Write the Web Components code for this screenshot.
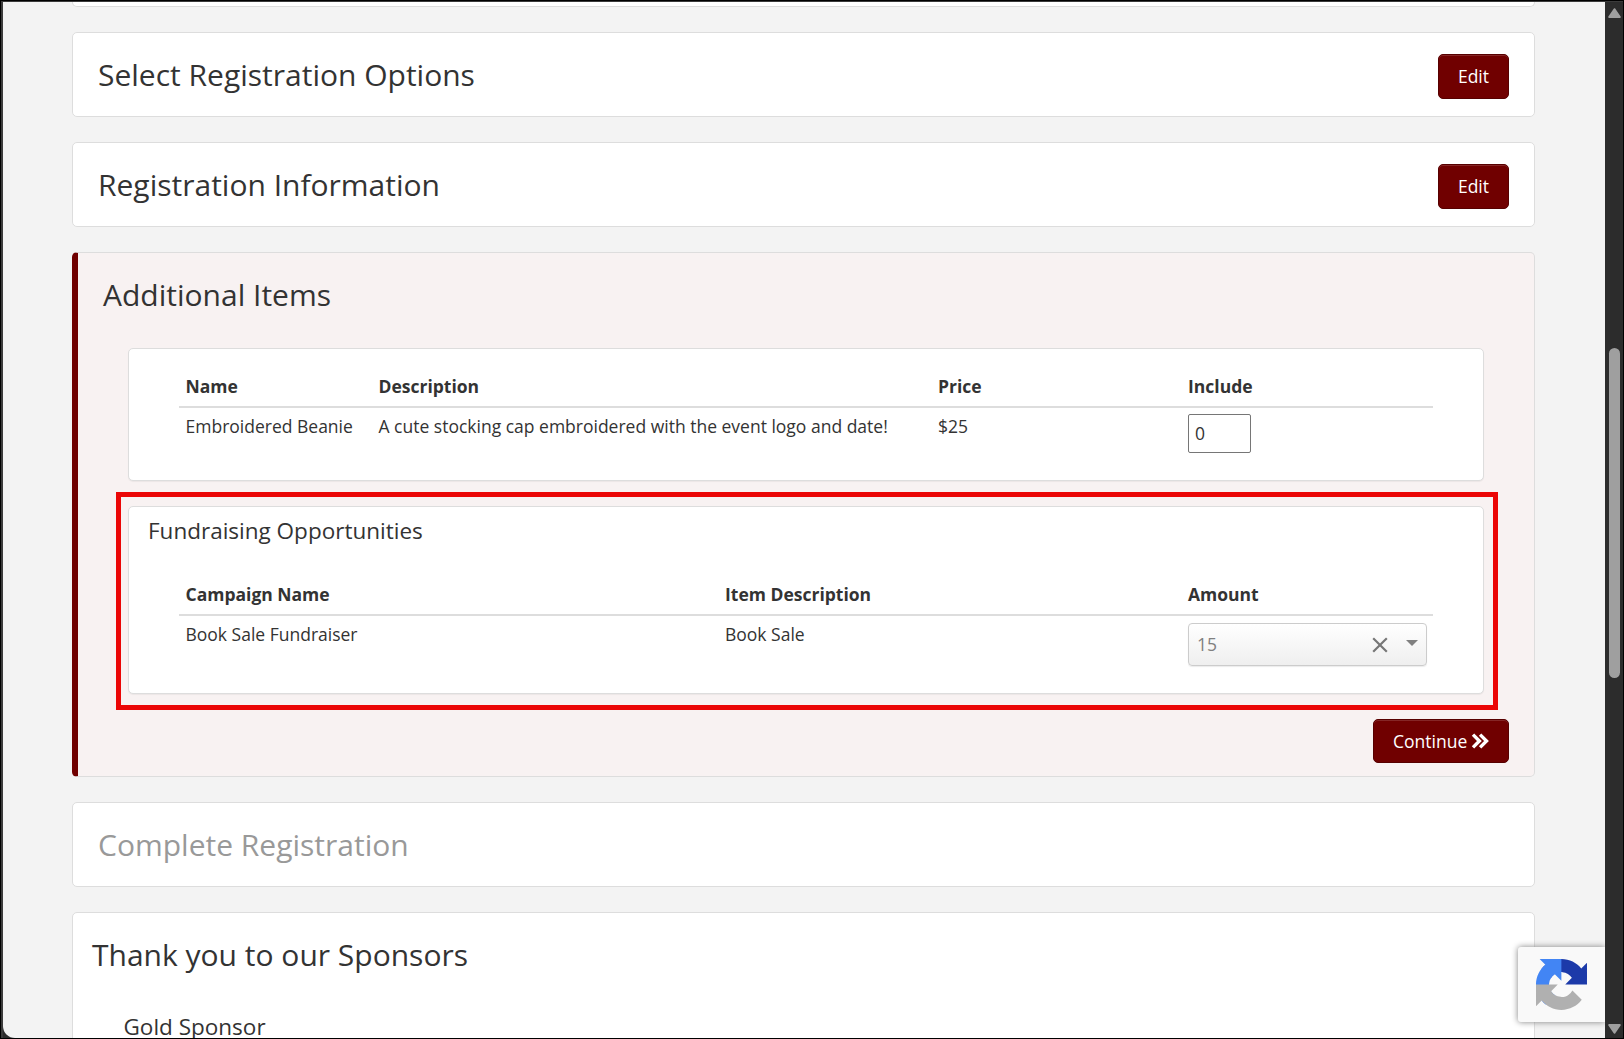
<!DOCTYPE html>
<html lang="en">
<head>
<meta charset="utf-8">
<title>Event Registration</title>
<style>
  html, body { margin: 0; height: 100%; overflow: hidden; }
  body { background: #000; color: #333; font: 17.5px/25px "Open Sans", "Noto Sans", sans-serif; }
</style>
</head>
<body>
<app-window>
  <reg-section></reg-section>
  <reg-section heading="Select Registration Options"><action-button slot="action">Edit</action-button></reg-section>
  <reg-section heading="Registration Information"><action-button slot="action">Edit</action-button></reg-section>
  <reg-section heading="Additional Items" active>
    <item-panel>
      <item-table style="--cols: 193px 559.5px 250px 1fr">
        <span slot="head">Name</span>
        <span slot="head">Description</span>
        <span slot="head">Price</span>
        <span slot="head">Include</span>
        <span slot="cell">Embroidered Beanie</span>
        <span slot="cell">A cute stocking cap embroidered with the event logo and date!</span>
        <span slot="cell">$25</span>
        <quantity-box slot="cell">0</quantity-box>
      </item-table>
    </item-panel>
    <item-panel heading="Fundraising Opportunities" marked>
      <item-table style="--cols: 539.5px 463px 1fr">
        <span slot="head">Campaign Name</span>
        <span slot="head">Item Description</span>
        <span slot="head">Amount</span>
        <span slot="cell">Book Sale Fundraiser</span>
        <span slot="cell">Book Sale</span>
        <amount-select slot="cell">15</amount-select>
      </item-table>
    </item-panel>
    <action-button slot="footer" next>Continue</action-button>
  </reg-section>
  <reg-section heading="Complete Registration" disabled></reg-section>
  <sponsor-section heading="Thank you to our Sponsors">Gold Sponsor</sponsor-section>
  <captcha-badge slot="overlay"></captcha-badge>
  <scroll-bar slot="scroll"></scroll-bar>
</app-window>

<script>
// REGISTER AN ELEMENT THAT RENDERS ITS TEMPLATE INTO A SHADOWROOT
function define(name, render) {
  window.customElements.define(name, class extends HTMLElement {
    connectedCallback() {
      if (this.shadowRoot) { return; }
      this.attachShadow({ mode : "open" });
      this.shadowRoot.innerHTML = render(this);
    }
  });
}

// WINDOW FRAME AROUND THE SCROLLED PAGE
define('app-window', () => `
  <style>
    :host { display: flex; box-sizing: border-box; height: 100vh; padding: 1px; background: #000; }
    .frame { position: relative; display: flex; flex: 1; overflow: hidden; border-top: 1px solid #3b3b3b; border-left: 2px solid #3b3b3b; background: #2c2c2c; }
    main { display: flex; flex-direction: column; gap: 25px; flex: 1; box-sizing: border-box; padding: 0 70px 0 69px; overflow: hidden; background: #f3f3f3; border-bottom-left-radius: 12px; }
    ::slotted(reg-section:first-child) { height: 5px; min-height: 0; border-top: 0; border-radius: 0 0 5px 5px; }
  </style>
  <div class="frame">
    <main><slot></slot></main>
    <slot name="overlay"></slot>
    <slot name="scroll"></slot>
  </div>
`);

// ONE STEP OF THE REGISTRATION
define('reg-section', el => `
  <style>
    :host { display: block; flex: none; box-sizing: border-box; min-height: 85px; border: 1px solid #ddd; border-radius: 5px; background: #fff; }
    header { display: flex; align-items: center; justify-content: space-between; height: 83px; padding: 0 25px; }
    h2 { margin: 0; font-size: 30px; line-height: 33px; font-weight: 400; }
    ::slotted([slot="action"]) { margin-top: 4px; }
    footer { display: flex; justify-content: flex-end; padding: 25px 25px 0 0; }
    :host([active]) { height: 525px; border-left: 6px solid #700000; background: #f8f2f2; }
    :host([active]) header { height: 82px; }
    :host([disabled]) h2 { color: #999; }
    .body { display: flex; flex-direction: column; gap: 25px; padding: 13px 50px 0; }
  </style>
  ${el.hasAttribute('heading') ? `<header><h2>${el.getAttribute('heading')}</h2><slot name="action"></slot></header>` : ''}
  ${el.hasAttribute('active') ? `<div class="body"><slot></slot></div><footer><slot name="footer"></slot></footer>` : ''}
`);

define('action-button', el => `
  <style>
    :host { display: inline-flex; align-items: center; gap: 4px; box-sizing: border-box; height: 45px; padding: 0 19px; border: 1px solid #570000; border-radius: 5px; background: #700000; color: #fff; box-shadow: inset 0 1px 0 rgba(255,255,255,.15); }
    :host([next]) { width: 136px; height: 44px; }
    svg { display: block; flex: none; margin-top: -1px; }
  </style>
  <slot></slot>
  ${el.hasAttribute('next') ? `<svg width="18" height="16" viewBox="0 0 18 16"><path d="M2 1.6 8.4 8 2 14.4M9.1 1.6 15.5 8 9.1 14.4" fill="none" stroke="#fff" stroke-width="3.4"/></svg>` : ''}
`);

// WHITE BOX, OPTIONALLY MARKED WITH A RED OUTLINE
define('item-panel', el => `
  <style>
    :host { display: block; position: relative; box-sizing: border-box; height: 133px; padding: 18px 50px 0; border: 1px solid #ddd; border-radius: 5px; background: #fff; box-shadow: 0 1px 1px rgba(0,0,0,.05); }
    :host([heading]) { height: 188px; padding-top: 10px; }
    h3 { margin: 0 0 31px -31px; font-size: 22.5px; line-height: 27px; font-weight: 400; }
    .mark { position: absolute; top: -15px; right: -15px; bottom: -17px; left: -13px; border: 5px solid #eb0606; pointer-events: none; }
  </style>
  ${el.hasAttribute('heading') ? `<h3>${el.getAttribute('heading')}</h3>` : ''}
  <slot></slot>
  ${el.hasAttribute('marked') ? '<div class="mark"></div>' : ''}
`);

define('item-table', () => `
  <style>
    :host { display: block; }
    .row { display: grid; grid-template-columns: var(--cols); }
    .head { height: 39px; border-bottom: 2px solid #ddd; font-weight: 700; }
    ::slotted(*) { margin: 6px 0 0 6.5px; white-space: nowrap; }
    ::slotted([slot="head"]) { margin-top: 7px; }
  </style>
  <div class="row head"><slot name="head"></slot></div>
  <div class="row"><slot name="cell"></slot></div>
`);

define('quantity-box', () => `
  <style>
    :host { display: flex; align-items: center; box-sizing: border-box; width: 63px; height: 39px; padding-left: 6px; border: 1px solid #767676; border-radius: 2px; background: #fff; }
  </style>
  <slot></slot>
`);

define('amount-select', () => `
  <style>
    :host { display: flex; align-items: center; box-sizing: border-box; width: 239px; height: 43px; margin-top: 7px !important; padding: 0 8px; border: 1px solid #ccc; border-radius: 4px; background: linear-gradient(#fff, #efefef); color: #808080; box-shadow: 0 1px 1px rgba(0,0,0,.08); }
    .value { flex: 1; }
    .clear { margin-right: 18px; }
    .arrow { margin-top: -3px; }
  </style>
  <span class="value"><slot></slot></span>
  <svg class="clear" width="16" height="16" viewBox="0 0 16 16"><path d="M1.2 1.2 14.8 14.8M14.8 1.2 1.2 14.8" stroke="#777" stroke-width="2.2"/></svg>
  <svg class="arrow" width="12" height="6" viewBox="0 0 12 6"><path d="M0 0H12L6 6Z" fill="#808080"/></svg>
`);

define('sponsor-section', el => `
  <style>
    :host { display: block; flex: none; box-sizing: border-box; height: 300px; padding: 25px 19px 0; border: 1px solid #ddd; border-radius: 5px; background: #fff; }
    h2 { margin: 0; font-size: 30px; line-height: 33px; font-weight: 400; }
    h3 { margin: 42px 0 0 31.5px; font-size: 22.5px; line-height: 27px; font-weight: 400; }
  </style>
  <h2>${el.getAttribute('heading')}</h2>
  <h3><slot></slot></h3>
`);

define('captcha-badge', () => `
  <style>
    :host { position: absolute; right: 18px; bottom: 16px; display: block; box-sizing: border-box; width: 87px; height: 75px; padding: 12px 0 0 18px; border-radius: 3px 0 0 3px; background: #f9f9f9; box-shadow: 0 0 6px #808080; clip-path: inset(-10px 0 -10px -10px); }
    svg { display: block; }
  </style>
  <svg width="51" height="51" viewBox="0 0 64 64">
    <path fill="#1c3aa9" d="M64 31.955l-.033-1.37V4.687l-7.16 7.16C50.948 4.674 42.033.093 32.05.093c-10.4 0-19.622 4.96-25.458 12.64l11.736 11.86a15.55 15.55 0 0 1 4.754-5.334c2.05-1.6 4.952-2.906 8.968-2.906.485 0 .86.057 1.135.163 4.976.393 9.288 3.14 11.828 7.124l-8.307 8.307L64 31.953"/>
    <path fill="#4285f4" d="M31.862.094l-1.37.033H4.594l7.16 7.16C4.58 13.147 0 22.06 0 32.046c0 10.4 4.96 19.622 12.64 25.458L24.5 45.768a15.55 15.55 0 0 1-5.334-4.754c-1.6-2.05-2.906-4.952-2.906-8.968 0-.485.057-.86.163-1.135.393-4.976 3.14-9.288 7.124-11.828l8.307 8.307L31.86.095"/>
    <path fill="#b0b0b0" d="M.001 32.045l.033 1.37v25.898l7.16-7.16c5.86 7.173 14.774 11.754 24.76 11.754 10.4 0 19.622-4.96 25.458-12.64l-11.736-11.86a15.55 15.55 0 0 1-4.754 5.334c-2.05 1.6-4.952 2.906-8.968 2.906-.485 0-.86-.057-1.135-.163-4.976-.393-9.288-3.14-11.828-7.124l8.307-8.307c-10.522.04-22.4.066-27.295-.005"/>
  </svg>
`);

define('scroll-bar', () => `
  <style>
    :host { display: flex; flex-direction: column; align-items: center; box-sizing: border-box; width: 18px; padding: 6px 0 4px; background: #2c2c2c; }
    .thumb { width: 11px; height: 330px; margin: 330px 0 auto; border-radius: 6px; background: #9f9f9f; }
  </style>
  <svg width="13" height="10" viewBox="0 0 13 10"><path d="M6.5 1.2 11.8 9H1.2Z" fill="#9f9f9f" stroke="#9f9f9f" stroke-width="2" stroke-linejoin="round"/></svg>
  <div class="thumb"></div>
  <svg width="13" height="10" viewBox="0 0 13 10"><path d="M6.5 8.8 11.8 1H1.2Z" fill="#9f9f9f" stroke="#9f9f9f" stroke-width="2" stroke-linejoin="round"/></svg>
`);
</script>
</body>
</html>
